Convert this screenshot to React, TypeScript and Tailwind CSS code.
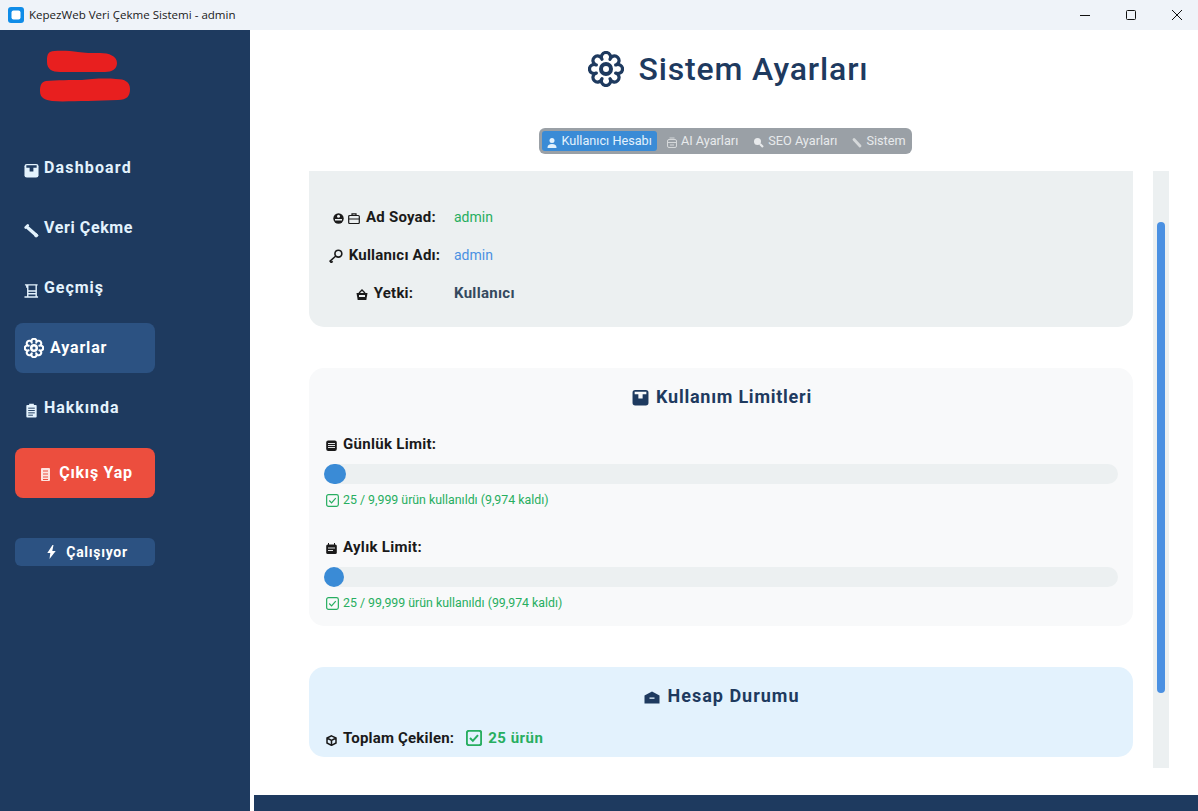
import React from "react";

const font = { fontFamily: "Roboto, 'Liberation Sans', sans-serif" };

function flowerPath(cx: number, cy: number, R: number, r: number, n = 8) {
  let d = "";
  const off = Math.PI / n;
  for (let i = 0; i <= n; i++) {
    const a = (i * 2 * Math.PI) / n + off;
    const x = (cx + R * Math.cos(a)).toFixed(2);
    const y = (cy + R * Math.sin(a)).toFixed(2);
    d += i === 0 ? `M${x} ${y}` : `A${r} ${r} 0 1 1 ${x} ${y}`;
  }
  return d + "Z";
}

function Gear({ size, stroke, center = 3, className }: { size: number; stroke: number; center?: number; className?: string }) {
  return (
    <svg width={size} height={size} viewBox="0 0 36 36" className={className} fill="none" stroke="currentColor" strokeWidth={stroke}>
      <path d={flowerPath(18, 18, 10.5, 4.6)} strokeLinejoin="round" />
      <circle cx="18" cy="18" r="5" strokeWidth={center} />
    </svg>
  );
}

const BoxIcon = ({ c = "#e3f2fd", inner = "#1e3a5f", s = 15 }) => (
  <svg width={s} height={s} viewBox="0 0 16 16">
    <rect x="0.500" y="1" width="15" height="14.500" rx="2.500" fill={c} />
    <path d="M2.500 2.500h11v2.500H10v4H6V5H2.500z" fill={inner} />
  </svg>
);
const WrenchIcon = ({ c = "#e3f2fd", s = 15 }) => (
  <svg width={s} height={s} viewBox="0 0 16 16" fill="none" stroke={c} strokeLinecap="round">
    <path d="M4 5 12.500 12.500" strokeWidth="3.600" />
    <path d="M1.800 4.800 4 2.600" strokeWidth="2.800" />
    <circle cx="13" cy="13.200" r="1.700" fill={c} strokeWidth="1" />
  </svg>
);
const ScrollIcon = ({ c = "#e3f2fd", s = 15 }) => (
  <svg width={s} height={s} viewBox="0 0 16 16" fill="none" stroke={c} strokeWidth="1.500">
    <path d="M1 2h13.500M3 2v3M4 2v12.500M13 2v12.500M0.500 15h14.500M4 8.500h9M4 11.500h9" />
  </svg>
);
const ClipIcon = ({ c = "#e3f2fd", s = 15 }) => (
  <svg width={s} height={s} viewBox="0 0 16 16">
    <rect x="2.500" y="2" width="11" height="13.500" rx="1" fill={c} />
    <rect x="5.500" y="0.800" width="5" height="2.500" fill={c} />
    <path d="M4.500 5.500h7M4.500 8h7M4.500 10.500h7M4.500 13h5" stroke="#1e3a5f" strokeWidth="1" />
  </svg>
);
const DoorIcon = () => (
  <svg width="9" height="13" viewBox="0 0 9 13">
    <rect x="0" y="0" width="9" height="13" rx="1" fill="#fde3df" />
    <path d="M2 3h5M2 6h5M2 9h5M2 11.500h5" stroke="#ec4e3e" strokeWidth="1.100" />
  </svg>
);
const Bolt = () => (
  <svg width="11" height="14" viewBox="0 0 10 14" fill="#ffffff">
    <path d="M6 0 0.800 8h3L3 14l6.200-8H5.800L7 0z" />
  </svg>
);
const Person = ({ c }: { c: string }) => (
  <svg width="10" height="11" viewBox="0 0 10 11" fill={c}>
    <circle cx="5" cy="3.500" r="2.500" />
    <path d="M0.500 11c0-3 1.500-4 4.500-4s4.500 1 4.500 4z" />
  </svg>
);
const Robot = ({ c }: { c: string }) => (
  <svg width="10" height="11" viewBox="0 0 10 11" fill="none" stroke={c}>
    <rect x="0.500" y="2.500" width="9" height="8" rx="1.500" />
    <path d="M0.500 5.500h9M3 8h4M2.500 1h5" />
  </svg>
);
const Search = ({ c }: { c: string }) => (
  <svg width="11" height="11" viewBox="0 0 11 11" fill="none">
    <circle cx="4.500" cy="4.500" r="3.500" fill={c} />
    <path d="M7 7l3 3" stroke={c} strokeWidth="2.200" />
  </svg>
);
const Wrench2 = ({ c }: { c: string }) => (
  <svg width="10" height="11" viewBox="0 0 10 11" fill="none" stroke={c} strokeLinecap="round">
    <path d="M2 2.500 8 9" strokeWidth="2.800" />
  </svg>
);
const Check = ({ s = 14, w = 1.300 }: { s?: number; w?: number }) => (
  <svg width={s} height={s} viewBox="0 0 14 14" fill="none" stroke="#27ae60" strokeWidth={w}>
    <rect x="0.700" y="0.700" width="12.600" height="12.600" rx="2" />
    <path d="M3.500 7l2.500 2.500 4.500-5" />
  </svg>
);
const Ninja = () => (
  <svg width="11" height="11" viewBox="0 0 11 11">
    <circle cx="5.500" cy="5.500" r="5.200" fill="#1a1a1a" />
    <circle cx="5.500" cy="3.300" r="1.500" fill="#ecf0f1" />
    <rect x="2" y="6" width="7" height="1.500" fill="#ecf0f1" />
  </svg>
);
const Brief = () => (
  <svg width="12" height="11" viewBox="0 0 12 11" fill="none" stroke="#1a1a1a" strokeWidth="1.200">
    <rect x="0.700" y="2.500" width="10.600" height="8" rx="1" />
    <path d="M4 2.500V0.800h4v1.700M0.700 6h10.600" />
  </svg>
);
const Key = () => (
  <svg width="14" height="14" viewBox="0 0 13 13" fill="none" stroke="#1a1a1a" strokeWidth="1.500">
    <circle cx="8.700" cy="4.300" r="3.200" />
    <path d="M6.300 6.500 1 11.200 2 12.500l1.500-1" />
  </svg>
);
const Crown = () => (
  <svg width="12" height="11" viewBox="0 0 12 11">
    <path d="M0.500 4h11l-1.200 7H1.700z" fill="#1a1a1a" />
    <path d="M3 4l3-3 3 3" fill="none" stroke="#1a1a1a" strokeWidth="1.400" />
    <rect x="3" y="6" width="6" height="2" fill="#ecf0f1" />
  </svg>
);
const Memo = () => (
  <svg width="11" height="11" viewBox="0 0 11 11">
    <rect x="0.200" y="0.500" width="10.600" height="10.500" rx="2" fill="#1a1a1a" />
    <path d="M2 3.500h7M2 5.500h7M2 7.500h7" stroke="#f8f9fa" strokeWidth="0.900" />
  </svg>
);
const Cal = () => (
  <svg width="11" height="11" viewBox="0 0 11 11">
    <rect x="0.200" y="1.500" width="10.600" height="9.500" rx="1.500" fill="#1a1a1a" />
    <path d="M2.500 0v2M8.500 0v2" stroke="#1a1a1a" />
    <path d="M2 5h7M2 7.500h5" stroke="#f8f9fa" strokeWidth="0.900" />
  </svg>
);
const Pack = () => (
  <svg width="11" height="11" viewBox="0 0 11 11" fill="none" stroke="#1a1a1a" strokeWidth="1.500">
    <path d="M5.500 0.800 10 3v5L5.500 10.400 1 8V3zM1 3l4.500 2.300L10 3M5.500 5.300v5" />
  </svg>
);
const House = () => (
  <svg width="16" height="13" viewBox="0 0 16 13">
    <path d="M8 0.500 15.500 4.500V12.500H0.500V4.500z" fill="#1e3a5f" />
    <rect x="5.500" y="6.500" width="5" height="1.300" fill="#e3f2fd" />
  </svg>
);

function NavItem({ icon, label, tracking }: { icon: React.ReactNode; label: string; tracking: string }) {
  return (
    <div className={`flex h-[50px] w-[140px] items-center rounded-lg pl-[9px] text-[16px] font-bold text-[#e3f2fd] ${tracking}`}>
      <span className="flex w-[20px] translate-y-[2px] justify-start">{icon}</span>
      <span>{label}</span>
    </div>
  );
}

function Tab({ icon, label, active }: { icon: React.ReactNode; label: string; active?: boolean }) {
  return (
    <div className={`flex h-[20px] items-center gap-[4px] rounded-[3px] px-[5px] text-[12.7px] ${active ? "bg-[#3a8bd6] text-[#e3f2fd]" : "text-[#e8eaec]"}`}>
      <span className="flex translate-y-[1px]">{icon}</span>
      <span>{label}</span>
    </div>
  );
}

function InfoRow({ icons, label, value, valueClass }: { icons: React.ReactNode; label: string; value: string; valueClass: string }) {
  return (
    <div className="flex h-[38px] items-center">
      <div className="flex w-[131px] items-center justify-center gap-[6px] text-[15px] font-bold tracking-[0.2px] text-[#1a1a1a]">
        <span className="flex translate-y-[1px] items-center gap-[4px]">{icons}</span>
        <span>{label}</span>
      </div>
      <span className={`ml-[4px] text-[14px] ${valueClass}`}>{value}</span>
    </div>
  );
}

function Limit({ icon, label, note, knob }: { icon: React.ReactNode; label: string; note: string; knob: string }) {
  return (
    <div>
      <div className="flex h-[20px] items-center gap-[6px] pl-[2px] text-[15px] font-bold tracking-[0.3px] text-[#1a1a1a]">
        <span className="flex translate-y-[1px]">{icon}</span>
        <span>{label}</span>
      </div>
      <div className="relative mt-[10px] h-[20px] rounded-[10px] bg-[#ecf0f1]">
        <div className={`absolute left-0 top-0 h-[20px] rounded-[10px] bg-[#3a8bd6] ${knob}`} />
      </div>
      <div className="mt-[9px] flex h-[14px] items-center gap-[4px] pl-[2px] text-[12.35px] text-[#27ae60]">
        <Check s={13} />
        <span>{note}</span>
      </div>
    </div>
  );
}

export default function App() {
  return (
    <div className="h-[811px] w-[1198px] overflow-hidden bg-white" style={font}>
      {/* window title bar */}
      <div className="flex h-[30px] items-center bg-[#eff3f9]">
        <svg width="16" height="16" viewBox="0 0 16 16" className="ml-[8px]">
          <rect width="16" height="16" rx="3" fill="#0f8ce8" />
          <rect x="3.500" y="3.500" width="9" height="9" rx="2" fill="#ffffff" />
        </svg>
        <span className="ml-[5px] text-[11.55px] text-[#1a1a1a]" style={{ fontFamily: "'Open Sans', sans-serif" }}>
          KepezWeb Veri Çekme Sistemi - admin
        </span>
        <div className="ml-auto flex items-center gap-[36px] pr-[16px]">
          <svg width="10" height="10" viewBox="0 0 10 10" stroke="#111" fill="none"><path d="M0 5.500h10" /></svg>
          <svg width="10" height="10" viewBox="0 0 10 10" stroke="#111" fill="none"><rect x="0.500" y="0.500" width="9" height="9" rx="1" /></svg>
          <svg width="10" height="10" viewBox="0 0 10 10" stroke="#111" fill="none"><path d="M0 0l10 10M10 0 0 10" /></svg>
        </div>
      </div>

      <div className="flex h-[781px]">
        {/* sidebar */}
        <aside className="flex h-full w-[250px] shrink-0 flex-col bg-[#1e3a5f] pl-[15px]">
          <svg width="100" height="60" viewBox="0 0 100 60" className="ml-[23px] mt-[19px]">
            <path d="M12 3c6-2 20-1 28 0 6 1 14 1 22 1 9 0 17 3 17 10 0 6-5 9-12 9H22c-8 0-13-3-13-10 0-5 0-8 3-10z" fill="#e81f1f" />
            <path d="M8 32c10-1 26-1 36-1 8-1 22-2 34-1 9 0 14 3 14 10 0 7-3 11-12 11l-30 1c-14 0-26 1-36 0-7-1-12-3-12-10 0-5 1-9 6-10z" fill="#e81f1f" />
          </svg>
          <div className="mt-[34px] flex flex-col gap-[10px]">
            <NavItem icon={<BoxIcon />} label="Dashboard" tracking="tracking-[1.15px]" />
            <NavItem icon={<WrenchIcon />} label="Veri Çekme" tracking="tracking-[0.6px]" />
            <NavItem icon={<ScrollIcon />} label="Geçmiş" tracking="tracking-[0.95px]" />
            <div className="flex h-[50px] w-[140px] items-center gap-[6px] rounded-lg bg-[#2c5282] pl-[9px] text-[16px] font-bold tracking-[0.85px] text-white">
              <Gear size={20} stroke={3.800} center={4.500} />
              <span>Ayarlar</span>
            </div>
            <NavItem icon={<ClipIcon />} label="Hakkında" tracking="tracking-[0.95px]" />
          </div>
          <div className="mt-[15px] flex h-[50px] w-[140px] items-center justify-center gap-[9px] rounded-lg bg-[#ec4e3e] pl-[4px] text-[16px] font-bold tracking-[0.75px] text-white">
            <span className="flex translate-y-[1px]"><DoorIcon /></span>
            <span>Çıkış Yap</span>
          </div>
          <div className="mt-[40px] flex h-[28px] w-[140px] items-center justify-center gap-[9px] rounded-md bg-[#2c5282] pl-[4px] text-[14px] font-bold tracking-[0.7px] text-white">
            <Bolt />
            <span>Çalışıyor</span>
          </div>
        </aside>

        {/* main */}
        <main className="flex min-w-0 flex-1 flex-col">
          <div className="flex h-[78px] items-center justify-center pl-[9px]">
            <div className="flex items-center gap-[14px] text-[#1e3a5f]">
              <Gear size={36} stroke={3.200} center={4} />
              <h1 className="text-[32px] font-medium tracking-[0.87px]">Sistem Ayarları</h1>
            </div>
          </div>

          <div className="flex h-[63px] justify-center pl-[3px] pt-[20px]">
            <div className="flex h-[26px] items-center gap-[5px] rounded-[6px] bg-[#9aa0a6] pl-[3px] pr-[1px]">
              <Tab icon={<Person c="#e3f2fd" />} label="Kullanıcı Hesabı" active />
              <Tab icon={<Robot c="#d5d8da" />} label="AI Ayarları" />
              <Tab icon={<Search c="#e8eaec" />} label="SEO Ayarları" />
              <Tab icon={<Wrench2 c="#d5d8da" />} label="Sistem" />
            </div>
          </div>

          <div className="flex h-[597px] pl-[59px]">
            <div className="h-full w-[824px] shrink-0 overflow-hidden">
              <div className="flex h-[156px] flex-col justify-start rounded-b-[15px] bg-[#ecf0f1] pl-[10px] pt-[27px]">
                <InfoRow icons={<><Ninja /><Brief /></>} label="Ad Soyad:" value="admin" valueClass="text-[#27ae60]" />
                <InfoRow icons={<Key />} label="Kullanıcı Adı:" value="admin" valueClass="text-[#4a90e2]" />
                <InfoRow icons={<Crown />} label="Yetki:" value="Kullanıcı" valueClass="text-[15px] font-bold tracking-[0.3px] text-[#34495e]" />
              </div>

              <div className="mt-[41px] h-[258px] rounded-[15px] bg-[#f8f9fa] px-[15px] pt-[15px]">
                <div className="flex h-[27px] items-center justify-center gap-[7px] pl-[2px] text-[18px] font-bold tracking-[0.75px] text-[#1e3a5f]">
                  <span className="flex translate-y-[1px]"><BoxIcon c="#1e3a5f" inner="#f8f9fa" s={17} /></span>
                  <span>Kullanım Limitleri</span>
                </div>
                <div className="mt-[24px] flex flex-col gap-[30px]">
                  <Limit icon={<Memo />} label="Günlük Limit:" note="25 / 9,999 ürün kullanıldı (9,974 kaldı)" knob="w-[22px]" />
                  <Limit icon={<Cal />} label="Aylık Limit:" note="25 / 99,999 ürün kullanıldı (99,974 kaldı)" knob="w-[20px]" />
                </div>
              </div>

              <div className="mt-[41px] h-[90px] rounded-[15px] bg-[#e3f2fd] px-[15px] pt-[15px]">
                <div className="flex h-[27px] items-center justify-center gap-[7px] pl-[2px] text-[18px] font-bold tracking-[1px] text-[#1e3a5f]">
                  <span className="flex translate-y-[2px]"><House /></span>
                  <span>Hesap Durumu</span>
                </div>
                <div className="mt-[19px] flex h-[20px] items-center pl-[2px] text-[15px] font-bold">
                  <span className="flex translate-y-[2px]"><Pack /></span>
                  <span className="ml-[6px] tracking-[0.2px] text-[#1a1a1a]">Toplam Çekilen:</span>
                  <span className="ml-[12px]"><Check s={16} w={1.800} /></span>
                  <span className="ml-[6px] tracking-[0.5px] text-[#27ae60]">25 ürün</span>
                </div>
              </div>
            </div>
            <div className="ml-[20px] h-full w-[16px] bg-[#ecf0f1] px-[4px] pt-[51px]">
              <div className="h-[471px] w-[8px] rounded-[4px] bg-[#4a90e2]" />
            </div>
          </div>

          <div className="ml-[4px] mt-[27px] h-[16px] bg-[#1e3a5f]" />
        </main>
      </div>
    </div>
  );
}
